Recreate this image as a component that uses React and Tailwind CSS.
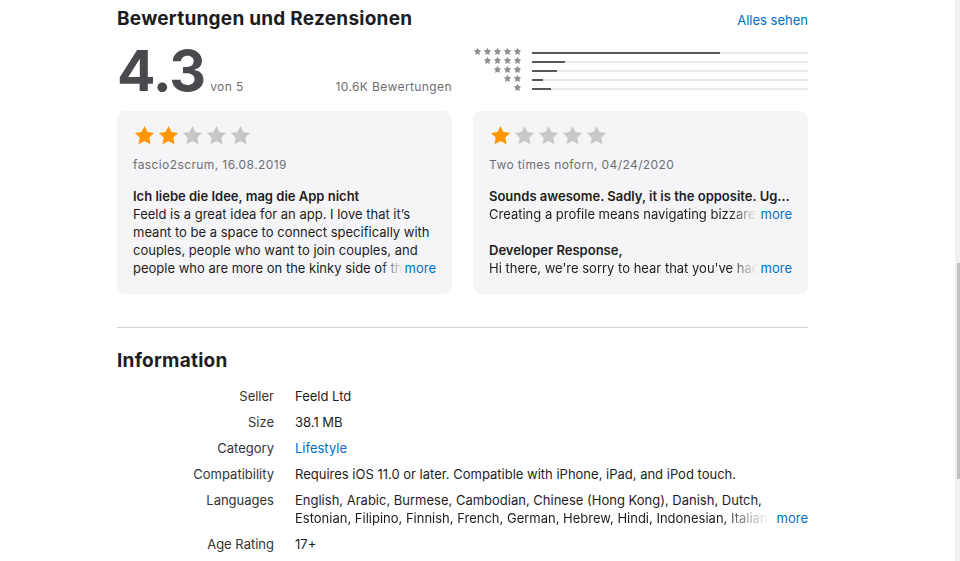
import React from 'react';

const STAR = '12,2 15.09,8.26 22,9.27 17,14.14 18.18,21.02 12,17.77 5.82,21.02 7,14.14 2,9.27 8.91,8.26';

function Star({ className }) {
  return (
    <svg viewBox="0 0 24 24" className={className}>
      <polygon points={STAR} fill="currentColor" />
    </svg>
  );
}

function StarRating({ value }) {
  return (
    <div className="flex gap-[1px]">
      {[1, 2, 3, 4, 5].map((i) => (
        <Star
          key={i}
          className={`h-[23px] w-[23px] ${i <= value ? 'text-[#ff9500]' : 'text-[#c7c7c7]'}`}
        />
      ))}
    </div>
  );
}

const HISTOGRAM = [
  { stars: 5, pct: 68 },
  { stars: 4, pct: 12 },
  { stars: 3, pct: 9 },
  { stars: 2, pct: 4 },
  { stars: 1, pct: 7 },
];

// one line of text that fades out before a "more" link
function FadeLine({ children, pad = 'pl-[4px]' }) {
  return (
    <div className="flex">
      <p className="min-w-0 flex-1 overflow-hidden whitespace-nowrap [mask-image:linear-gradient(to_right,#000_90%,transparent)]">
        {children}
      </p>
      <a className={`shrink-0 text-[#0070c9] ${pad}`}>more</a>
    </div>
  );
}

const INFO = [
  { label: 'Seller', value: 'Feeld Ltd' },
  { label: 'Size', value: '38.1 MB' },
  { label: 'Category', value: 'Lifestyle', link: true },
  { label: 'Compatibility', value: 'Requires iOS 11.0 or later. Compatible with iPhone, iPad, and iPod touch.' },
];

export default function App() {
  return (
    <div className="flex h-[561px] overflow-hidden bg-white font-['Inter','Liberation_Sans',sans-serif] text-[#1d1d1f] antialiased">
      <main className="flex-1 pl-[117px]">
        <div className="w-[691px]">
          {/* Ratings header */}
          <div className="flex items-baseline justify-between pt-[6px]">
            <h2 className="text-[19px] font-bold leading-[26px] tracking-[0.25px]">Bewertungen und Rezensionen</h2>
            <a className="text-[13px] text-[#0070c9]">Alles sehen</a>
          </div>

          <div className="mt-[5px] grid grid-cols-2 gap-[21px]">
            <div className="flex items-baseline justify-between pt-[3px]">
              <div className="flex items-baseline">
                <span className="text-[57px] font-bold leading-[62px] tracking-[-1px] text-[#4a4a4e]">4.3</span>
                <span className="ml-[5px] text-[12px] tracking-[0.4px] text-[#6e6e73]">von 5</span>
              </div>
              <span className="text-[12px] tracking-[0.4px] text-[#6e6e73]">10.6K Bewertungen</span>
            </div>
            <div className="flex gap-[10px] pt-[10px]">
              <div className="flex w-[49px] flex-col">
                {HISTOGRAM.map((row) => (
                  <div key={row.stars} className="flex h-[9px] items-center justify-end gap-[1px]">
                    {Array.from({ length: row.stars }).map((_, i) => (
                      <Star key={i} className="h-[9px] w-[9px] text-[#8e8e93]" />
                    ))}
                  </div>
                ))}
              </div>
              <div className="flex flex-1 flex-col">
                {HISTOGRAM.map((row) => (
                  <div key={row.stars} className="flex h-[9px] items-center pt-[2px]">
                    <div className="h-[2px] w-full bg-[#e8e8ed]">
                      <div className="h-full bg-[#58585c]" style={{ width: `${row.pct}%` }} />
                    </div>
                  </div>
                ))}
              </div>
            </div>
          </div>

          {/* Review cards */}
          <div className="mt-[9px] grid grid-cols-2 gap-[21px]">
            <div className="h-[183px] rounded-[8px] bg-[#f5f5f7] px-[16px] pt-[13px]">
              <StarRating value={2} />
              <p className="mt-[10px] text-[12px] leading-[16px] tracking-[0.4px] text-[#6e6e73]">fascio2scrum, 16.08.2019</p>
              <h3 className="mt-[14px] text-[13px] font-semibold leading-[18px]">Ich liebe die Idee, mag die App nicht</h3>
              <div className="relative text-[13px] leading-[18px]">
                <p className="line-clamp-4">
                  Feeld is a great idea for an app. I love that it’s meant to be a space to connect specifically with couples, people who want to join couples, and people who are more on the kinky side of the spectrum.
                </p>
                <span className="absolute bottom-0 right-0 flex items-center">
                  <span className="h-[18px] w-[22px] bg-gradient-to-r from-[#f5f5f7]/0 to-[#f5f5f7]" />
                  <a className="bg-[#f5f5f7] pl-[2px] text-[#0070c9]">more</a>
                </span>
              </div>
            </div>

            <div className="h-[183px] rounded-[8px] bg-[#f5f5f7] px-[16px] pt-[13px] text-[13px] leading-[18px]">
              <StarRating value={1} />
              <p className="mt-[10px] text-[12px] leading-[16px] tracking-[0.4px] text-[#6e6e73]">Two times noforn, 04/24/2020</p>
              <h3 className="mt-[14px] truncate font-semibold">
                Sounds awesome. Sadly, it is the opposite. Ugh, what a mess
              </h3>
              <FadeLine>Creating a profile means navigating bizzare and confusing menus</FadeLine>
              <h3 className="mt-[18px] font-semibold">Developer Response,</h3>
              <FadeLine>Hi there, we're sorry to hear that you've had a bad experience</FadeLine>
            </div>
          </div>

          <div className="mt-[33px] border-t border-[#d2d2d7]" />

          {/* Information */}
          <h2 className="mt-[20px] text-[19px] font-bold leading-[26px] tracking-[0.25px]">Information</h2>
          <dl className="mt-[13px] flex flex-col gap-[8px] text-[13px] leading-[18px]">
            {INFO.map((row) => (
              <div key={row.label} className="flex gap-[21px]">
                <dt className="w-[157px] shrink-0 text-right text-[#333336]">{row.label}</dt>
                <dd className={row.link ? 'text-[#0070c9]' : ''}>{row.value}</dd>
              </div>
            ))}
            <div className="flex gap-[21px]">
              <dt className="w-[157px] shrink-0 text-right text-[#333336]">Languages</dt>
              <dd className="min-w-0 flex-1">
                <p>English, Arabic, Burmese, Cambodian, Chinese (Hong Kong), Danish, Dutch,</p>
                <FadeLine pad="pl-[8px]">
                  Estonian, Filipino, Finnish, French, German, Hebrew, Hindi, Indonesian, Italian, Japanese, Korean
                </FadeLine>
              </dd>
            </div>
            <div className="flex gap-[21px]">
              <dt className="w-[157px] shrink-0 text-right text-[#333336]">Age Rating</dt>
              <dd>17+</dd>
            </div>
          </dl>
        </div>
      </main>

      {/* scrollbar */}
      <div className="flex w-[5px] justify-end bg-[#f1f1f1]">
        <div className="mt-[263px] h-[216px] w-[3px] bg-[#c1c1c1]" />
      </div>
    </div>
  );
}
